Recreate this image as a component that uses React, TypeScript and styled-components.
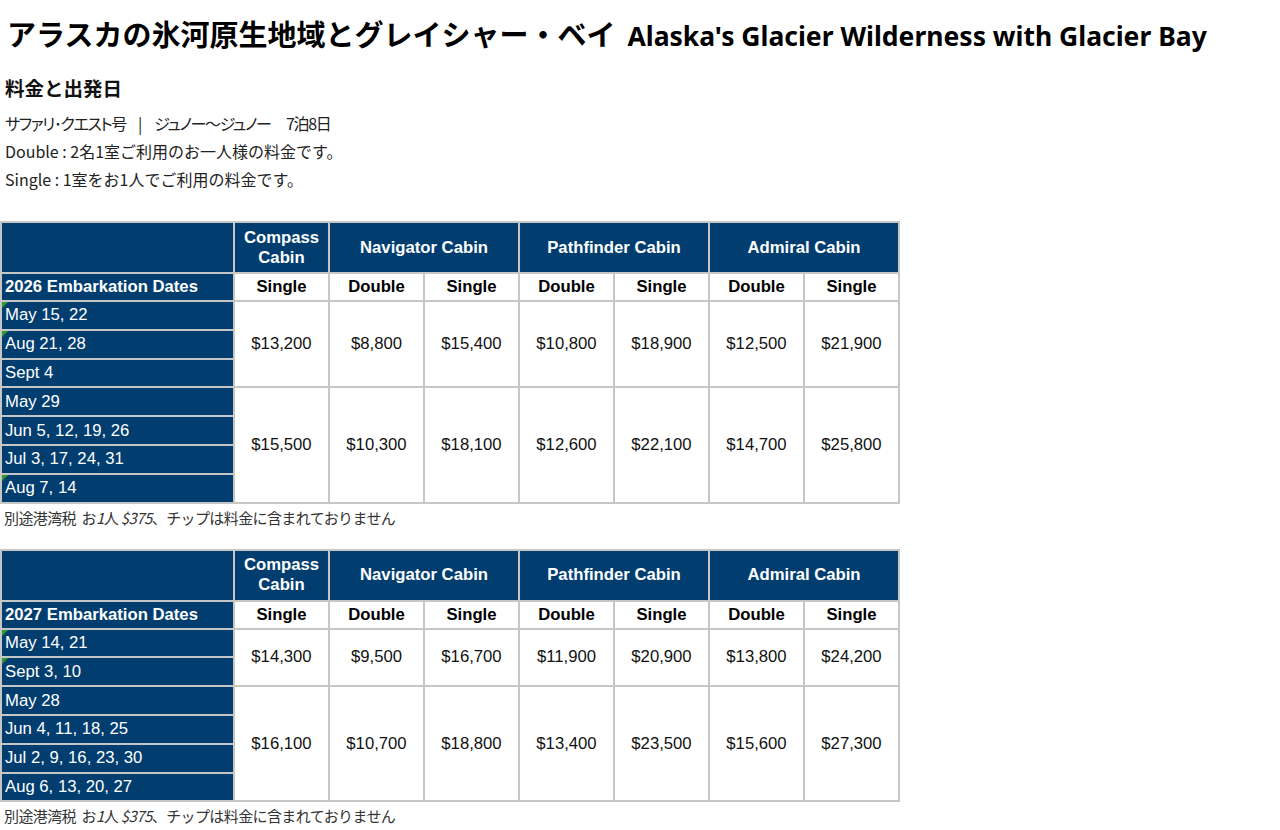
import React from "react";
import styled, { createGlobalStyle } from "styled-components";

const GlobalStyle = createGlobalStyle`
  html, body {
    margin: 0;
    padding: 0;
    background: #ffffff;
    color: #222222;
    font-family: "Noto Sans CJK JP", "Noto Sans", sans-serif;
  }
`;

const NAVY = "#013e6f";
const GRID = "#c6c6c6";

const Page = styled.div`
  width: 1280px;
  padding-top: 10px;
`;

const Title = styled.h1`
  margin: 0 0 0 7px;
  font-size: 29px;
  font-weight: 700;
  color: #000;
  line-height: 46px;
`;

const TitleEn = styled.span`
  margin-left: 12px;
  font-family: "Noto Sans", "Open Sans", sans-serif;
  font-size: 26.5px;
`;

const Heading = styled.h2`
  margin: 15px 0 7px 5px;
  font-size: 19.5px;
  font-weight: 700;
  color: #111;
  line-height: 28px;
`;

const Line = styled.p`
  margin: 0 0 0 5px;
  font-size: 16px;
  line-height: 28px;
  color: #222;
  white-space: pre;
`;

const Route = styled(Line)`
  font-feature-settings: "palt";
  letter-spacing: -1.4px;
`;

const Sep = styled.span<{ $gap: number }>`
  display: inline-block;
  margin: 0 ${(p) => p.$gap}px;
  letter-spacing: 0;
`;

const Block = styled.section`
  margin-top: 28px;
  & + & {
    margin-top: 17px;
  }
`;

const Table = styled.table`
  border-collapse: collapse;
  border: 2px solid ${GRID};
  font-family: "Liberation Sans", Arial, sans-serif;
  font-size: 16.7px;
  table-layout: fixed;
  width: 900px;
`;

const Cabin = styled.th`
  background: ${NAVY};
  color: #fff;
  font-weight: 700;
  text-align: center;
  border: 2px solid ${GRID};
  height: 49px;
  padding: 0 4px;
  line-height: 20px;
`;

const Kind = styled.th`
  background: #fff;
  color: #000;
  font-weight: 700;
  text-align: center;
  border: 2px solid ${GRID};
  height: 26px;
  padding: 0;
`;

const DatesHead = styled.th`
  background: ${NAVY};
  color: #fff;
  font-weight: 700;
  text-align: left;
  border: 2px solid ${GRID};
  padding: 0 3px;
  white-space: nowrap;
`;

const DateCell = styled.td<{ $mark?: boolean }>`
  position: relative;
  background: ${NAVY};
  color: #fff;
  text-align: left;
  border: 2px solid ${GRID};
  height: 26.8px;
  padding: 0 3px;
  white-space: nowrap;

  &::before {
    content: "";
    display: ${(p) => (p.$mark ? "block" : "none")};
    position: absolute;
    top: 0;
    left: 0;
    border-top: 6px solid #2e9a2e;
    border-right: 6px solid transparent;
  }
`;

const Price = styled.td`
  background: #fff;
  color: #111;
  text-align: center;
  border: 2px solid ${GRID};
  padding: 0;
`;

const Note = styled.p`
  margin: 0 0 0 4px;
  font-size: 15px;
  line-height: 28px;
  letter-spacing: -0.6px;
  color: #333;
  white-space: pre;

  em {
    font-style: italic;
  }
`;

type Group = { dates: { label: string; mark?: boolean }[]; prices: string[] };

const tables: { year: string; groups: Group[] }[] = [
  {
    year: "2026",
    groups: [
      {
        dates: [
          { label: "May 15, 22", mark: true },
          { label: "Aug 21, 28", mark: true },
          { label: "Sept 4" },
        ],
        prices: ["$13,200", "$8,800", "$15,400", "$10,800", "$18,900", "$12,500", "$21,900"],
      },
      {
        dates: [
          { label: "May 29" },
          { label: "Jun 5, 12, 19, 26" },
          { label: "Jul 3, 17, 24, 31" },
          { label: "Aug 7, 14", mark: true },
        ],
        prices: ["$15,500", "$10,300", "$18,100", "$12,600", "$22,100", "$14,700", "$25,800"],
      },
    ],
  },
  {
    year: "2027",
    groups: [
      {
        dates: [
          { label: "May 14, 21", mark: true },
          { label: "Sept 3, 10", mark: true },
        ],
        prices: ["$14,300", "$9,500", "$16,700", "$11,900", "$20,900", "$13,800", "$24,200"],
      },
      {
        dates: [
          { label: "May 28" },
          { label: "Jun 4, 11, 18, 25" },
          { label: "Jul 2, 9, 16, 23, 30" },
          { label: "Aug 6, 13, 20, 27" },
        ],
        prices: ["$16,100", "$10,700", "$18,800", "$13,400", "$23,500", "$15,600", "$27,300"],
      },
    ],
  },
];

const kinds = ["Single", "Double", "Single", "Double", "Single", "Double", "Single"];

function FareTable({ year, groups }: { year: string; groups: Group[] }) {
  return (
    <Block>
      <Table>
        <colgroup>
          <col style={{ width: 233 }} />
          {kinds.map((_, i) => (
            <col key={i} />
          ))}
        </colgroup>
        <thead>
          <tr>
            <Cabin />
            <Cabin>
              Compass
              <br />
              Cabin
            </Cabin>
            <Cabin colSpan={2}>Navigator Cabin</Cabin>
            <Cabin colSpan={2}>Pathfinder Cabin</Cabin>
            <Cabin colSpan={2}>Admiral Cabin</Cabin>
          </tr>
          <tr>
            <DatesHead>{year} Embarkation Dates</DatesHead>
            {kinds.map((k, i) => (
              <Kind key={i}>{k}</Kind>
            ))}
          </tr>
        </thead>
        <tbody>
          {groups.map((g, gi) =>
            g.dates.map((d, di) => (
              <tr key={`${gi}-${di}`}>
                <DateCell $mark={d.mark}>{d.label}</DateCell>
                {di === 0 &&
                  g.prices.map((p, pi) => (
                    <Price key={pi} rowSpan={g.dates.length}>
                      {p}
                    </Price>
                  ))}
              </tr>
            ))
          )}
        </tbody>
      </Table>
      <Note>
        別途港湾税  お<em>1</em>人 <em>$375</em>、チップは料金に含まれておりません
      </Note>
    </Block>
  );
}

export default function App() {
  return (
    <Page>
      <GlobalStyle />
      <Title>
        アラスカの氷河原生地域とグレイシャー・ベイ
        <TitleEn>Alaska's Glacier Wilderness with Glacier Bay</TitleEn>
      </Title>
      <Heading>料金と出発日</Heading>
      <Route>
        サファリ･クエスト号<Sep $gap={12}>|</Sep>ジュノー〜ジュノー<Sep $gap={6}> </Sep>7泊8日
      </Route>
      <Line>Double : 2名1室ご利用のお一人様の料金です。</Line>
      <Line>Single : 1室をお1人でご利用の料金です。</Line>
      {tables.map((t) => (
        <FareTable key={t.year} year={t.year} groups={t.groups} />
      ))}
    </Page>
  );
}
